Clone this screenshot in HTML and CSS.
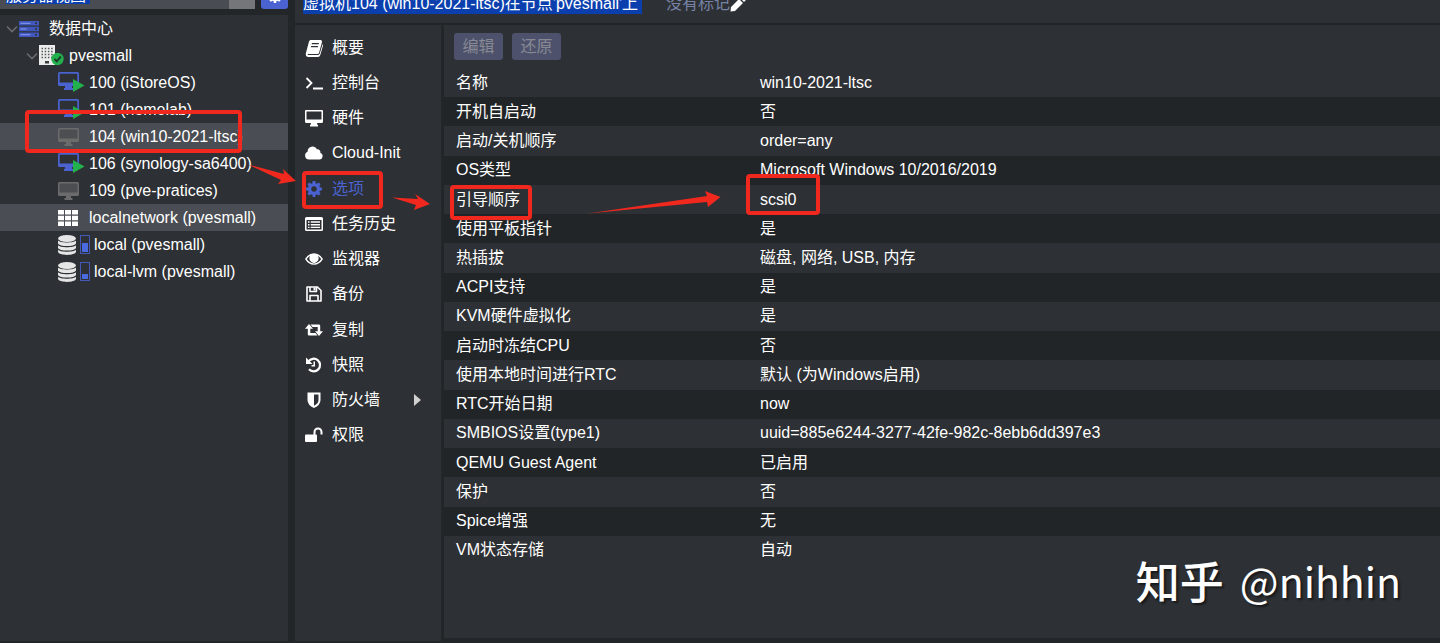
FILE: index.html
```
<!DOCTYPE html>
<html lang="zh-CN">
<head>
    <meta charset="UTF-8">
    <meta name="viewport" content="width=device-width, initial-scale=1.0">
    <title>pvesmall - Proxmox Virtual Environment</title>
    <link rel="stylesheet" href="styles.css">
</head>
<body>
    <!-- Shared icon shapes -->
    <svg class="sprite" aria-hidden="true">
        <symbol id="chevron" viewBox="0 0 12 12"><path d="M1 3.500l5 5 5-5" fill="none" stroke="#686b6e" stroke-width="1.600"/></symbol>
        <symbol id="desktop" viewBox="0 0 22 18"><path fill-rule="evenodd" d="M1.500 0h18a1.500 1.500 0 0 1 1.500 1.500v11a1.500 1.500 0 0 1-1.500 1.500H14v2h1v2H6v-2h1v-2H1.500A1.500 1.500 0 0 1 0 12.500v-11A1.500 1.500 0 0 1 1.500 0zM1.700 1.700v8.800h17.600V1.700z"/></symbol>
        <symbol id="desktop-off" viewBox="0 0 22 18"><path fill="#4d4e51" d="M1 1h19v10H1z"/><path fill="#6b6b6c" fill-rule="evenodd" d="M1.500 0h18a1.500 1.500 0 0 1 1.500 1.500v11a1.500 1.500 0 0 1-1.500 1.500H13v2h1.500v2h-8v-2H8v-2H1.500A1.500 1.500 0 0 1 0 12.500v-11A1.500 1.500 0 0 1 1.500 0zM1.500 1.500v9h18v-9z"/></symbol>
        <symbol id="desktop-on" viewBox="0 0 27 21"><use href="#desktop" width="22" height="18" fill="#4a63d0"/><path fill="#23b14d" d="M15 7l11.500 6.500L15 20z"/></symbol>
        <symbol id="database" viewBox="0 0 18 20"><ellipse cx="9" cy="3.500" rx="9" ry="3.500"/><path d="M0 5.500c2 2.600 16 2.600 18 0v3c-1 3.400-17 3.400-18 0zM0 10.300c2 2.600 16 2.600 18 0v2.700c-1 3.400-17 3.400-18 0zM0 14.800c2 2.600 16 2.600 18 0v2c-1 4.200-17 4.200-18 0z"/></symbol>
        <symbol id="gear" viewBox="0 0 16 16"><path fill-rule="evenodd" d="M6.700 0h2.600l.4 2.200 1.200.5 1.800-1.300 1.900 1.900-1.300 1.800.5 1.200 2.200.4v2.600l-2.200.4-.5 1.200 1.300 1.800-1.900 1.900-1.800-1.300-1.200.5-.4 2.200H6.700l-.4-2.200-1.200-.5-1.800 1.300-1.900-1.900 1.300-1.800-.5-1.200L0 9.300V6.700l2.200-.4.5-1.200-1.300-1.800 1.900-1.900 1.800 1.300 1.200-.5zM8 5.300a2.700 2.700 0 1 0 0 5.400 2.700 2.700 0 0 0 0-5.400z"/></symbol>
    </svg>

    <div class="workspace">
        <!-- Resource tree -->
        <aside class="sidebar">
            <div class="view-bar">
                <select class="view-select" aria-label="视图">
                    <option>服务器视图</option>
                </select>
                <button class="view-settings" type="button" aria-label="设置"><svg width="14" height="14" fill="#fff"><use href="#gear"/></svg></button>
            </div>
            <ul class="tree">
                <li class="node level-0">
                    <svg class="toggle" width="12" height="12"><use href="#chevron"/></svg>
                    <span class="node-icon"><svg width="20" height="16" viewBox="0 0 20 16"><g fill="#4057bd"><path d="M0 0h20v4.500H0zM0 5.700h20v4.500H0zM0 11.400h20V16H0z"/></g><path stroke="#8e9df0" d="M1.500 2.300h10M1.500 8h6M1.500 13.700h10"/><path fill="#2d3034" d="M16 1.500h2v1.500h-2zM16 7.200h2v1.500h-2zM16 13h2v1.500h-2z"/></svg></span>
                    <span>数据中心</span>
                </li>
                <li class="node level-1">
                    <svg class="toggle" width="12" height="12"><use href="#chevron"/></svg>
                    <span class="node-icon"><svg width="25" height="21" viewBox="0 0 25 21"><path fill="#ececec" d="M0 0h16v20H0z"/><path stroke="#54575a" stroke-width="1.500" stroke-dasharray="1.500 1.700" d="M2.500 3.500h12M2.500 6.500h12M2.500 9.500h12M2.500 12.500h12"/><path fill="#3a3d40" d="M6 16h4v2.500H6z"/><circle cx="18.500" cy="14" r="6.200" fill="#23b14d"/><path fill="none" stroke="#1d3c2a" stroke-width="2" d="M15.500 14l2.300 2.300 4-4.800"/></svg></span>
                    <span>pvesmall</span>
                </li>
                <li class="node level-2"><span class="node-icon"><svg width="27" height="21"><use href="#desktop-on"/></svg></span><span>100 (iStoreOS)</span></li>
                <li class="node level-2"><span class="node-icon"><svg width="27" height="21"><use href="#desktop-on"/></svg></span><span>101 (homelab)</span></li>
                <li class="node level-2 selected"><span class="node-icon"><svg width="22" height="18"><use href="#desktop-off"/></svg></span><span>104 (win10-2021-ltsc)</span></li>
                <li class="node level-2"><span class="node-icon"><svg width="27" height="21"><use href="#desktop-on"/></svg></span><span>106 (synology-sa6400)</span></li>
                <li class="node level-2"><span class="node-icon"><svg width="22" height="18"><use href="#desktop-off"/></svg></span><span>109 (pve-pratices)</span></li>
                <li class="node level-2 selected"><span class="node-icon"><svg width="20" height="16" viewBox="0 0 20 16" fill="#fff"><path d="M0 0h6v4.500H0zM7 0h6v4.500H7zM14 0h6v4.500h-6zM0 5.700h6v4.500H0zM7 5.700h6v4.500H7zM14 5.700h6v4.500h-6zM0 11.400h6v4.500H0zM7 11.400h6v4.500H7zM14 11.400h6v4.500h-6z"/></svg></span><span>localnetwork (pvesmall)</span></li>
                <li class="node level-2"><span class="node-icon storage"><svg width="18" height="20" fill="#e6e6e6"><use href="#database"/></svg><span class="usage"><span class="usage-fill" style="height: 60%"></span></span></span><span>local (pvesmall)</span></li>
                <li class="node level-2"><span class="node-icon storage"><svg width="18" height="20" fill="#e6e6e6"><use href="#database"/></svg><span class="usage"><span class="usage-fill" style="height: 33%"></span></span></span><span>local-lvm (pvesmall)</span></li>
            </ul>
        </aside>

        <main class="main">
            <header class="vm-header">
                <span class="vm-title">虚拟机104 (win10-2021-ltsc)在节点'pvesmall'上</span>
                <span class="vm-tags">没有标记</span>
                <svg width="16" height="16" viewBox="0 0 16 16" fill="#fff"><path d="M1 9l8-8 4 4-8 8-4.500.5zM10 0l1.500-1.500q1-.8 2 0l2 2q.8 1 0 2L14 4z"/></svg>
            </header>

            <div class="vm-body">
                <!-- VM section menu -->
                <nav class="menu">
                    <div class="menu-list">
                        <a class="menu-item" href="#"><svg viewBox="0 0 18 18"><path fill-rule="evenodd" d="M5.500 1h10.300q1.500.3 1.200 2l-3 11q-.4 1-1.500 1H3q-.8.700 0 1h10q1.300-.2 1.700-1.300L17.600 5q.6 1 .3 2l-2.600 9q-.6 1.900-2.300 2H3Q.500 17.500.800 14.500L4 2.500Q4.500 1 5.500 1zM7 4l-.4 1.300h7L14 4zM6.200 7l-.4 1.300h7l.4-1.300z"/></svg>概要</a>
                        <a class="menu-item" href="#"><svg viewBox="0 0 18 18"><path fill="none" stroke="#fff" stroke-width="1.800" d="M1.500 4l5 5-5 5M8 14.500h10"/></svg>控制台</a>
                        <a class="menu-item" href="#"><svg viewBox="0 0 18 18"><path fill-rule="evenodd" d="M1 1h16q1 0 1 1v10.500q0 1.500-1.500 1.500H12l.5 2H13v1.500H5V16h.5l.5-2H1.500Q0 14 0 12.500V2q0-1 1-1zM1.500 2.500v8h15v-8z"/></svg>硬件</a>
                        <a class="menu-item" href="#"><svg viewBox="0 0 18 18"><path d="M4 15.500a4 4 0 0 1-1.400-7.700A5 5 0 0 1 12 5.300a3 3 0 0 1 3.400 3.600A3.400 3.400 0 0 1 14.500 15.500z"/></svg>Cloud-Init</a>
                        <a class="menu-item active" href="#"><svg viewBox="-1 -1 18 18"><use href="#gear" width="16" height="16"/></svg>选项</a>
                        <a class="menu-item" href="#"><svg viewBox="0 0 18 18"><path fill-rule="evenodd" d="M1.500 2h15Q18 2 18 3.500v11q0 1.500-1.500 1.500h-15Q0 16 0 14.500v-11Q0 2 1.500 2zM1.500 5v9.500h15V5z"/><path d="M3 6.300h1.500v1.400H3zM3 9h1.500v1.400H3zM3 11.700h1.500V13H3zM5.700 6.300H15v1.400H5.700zM5.700 9H15v1.400H5.700zM5.700 11.700H15V13H5.700z"/></svg>任务历史</a>
                        <a class="menu-item" href="#"><svg viewBox="0 0 18 18"><path fill-rule="evenodd" d="M0 9q3.500-5.800 9-5.800T18 9q-3.500 5.800-9 5.800T0 9zm1.800 0Q4.800 13.400 9 13.400T16.200 9q-1.300-2-3.400-3.200a4.500 4.500 0 1 1-7.600 0Q3.100 7 1.800 9z"/><path fill-rule="evenodd" d="M9 5a3.800 3.800 0 1 0 3.800 3.800A3.800 3.800 0 0 0 9 5zm-2 3.700a.6.600 0 0 1-1 0A3 3 0 0 1 9 6a.5.500 0 0 1 0 1 2 2 0 0 0-2 1.700z"/></svg>监视器</a>
                        <a class="menu-item" href="#"><svg viewBox="0 0 18 18"><path fill="none" stroke="#fff" stroke-width="1.600" stroke-linejoin="round" d="M2 2h10.500L16 5.500V16H2zM5 16v-5.500h8V16M5 2v4.500h6.500V2"/><path d="M8.500 2.500h2v3h-2z"/></svg>备份</a>
                        <a class="menu-item" href="#"><svg viewBox="0 0 18 18"><path d="M4 3l4 4.700H5.300V12h5.200l2 2.500H4q-1.200 0-1.200-1.200V7.700H0zM14 15l-4-4.700h2.700V6H7.500l-2-2.500H14q1.200 0 1.200 1.200v5.600H18z"/></svg>复制</a>
                        <a class="menu-item" href="#"><svg viewBox="0 0 18 18"><path fill="none" stroke="#fff" stroke-width="2.200" d="M3.500 5.500A6.300 6.300 0 1 1 4 13.200"/><path d="M1 1.500V8h6.500z"/><path d="M8.500 5.500H10v5H6.500V9h2z"/></svg>快照</a>
                        <a class="menu-item" href="#"><svg viewBox="0 0 18 18"><path fill-rule="evenodd" d="M2.500 1.500h13V9q0 5-6.500 8-6.500-3-6.500-8zM9 3.500v11.300q4.500-2.300 4.500-5.800V3.500z"/></svg>防火墙<span class="submenu-arrow"></span></a>
                        <a class="menu-item" href="#"><svg viewBox="0 0 18 18"><path d="M1 8.500h10q1 0 1 1V15q0 1-1 1H1q-1 0-1-1V9.500q0-1 1-1z"/><path fill="none" stroke="#fff" stroke-width="2" d="M9.500 9V6a3.500 3.500 0 0 1 7 0v2.500"/></svg>权限</a>
                    </div>
                </nav>

                <!-- VM options -->
                <section class="options">
                    <div class="toolbar">
                        <button class="tool-btn" type="button" disabled>编辑</button>
                        <button class="tool-btn" type="button" disabled>还原</button>
                    </div>
                    <table class="option-table">
                        <tbody>
                            <tr><th scope="row">名称</th><td>win10-2021-ltsc</td></tr>
                            <tr><th scope="row">开机自启动</th><td>否</td></tr>
                            <tr><th scope="row">启动/关机顺序</th><td>order=any</td></tr>
                            <tr><th scope="row">OS类型</th><td>Microsoft Windows 10/2016/2019</td></tr>
                            <tr><th scope="row">引导顺序</th><td>scsi0</td></tr>
                            <tr><th scope="row">使用平板指针</th><td>是</td></tr>
                            <tr><th scope="row">热插拔</th><td>磁盘, 网络, USB, 内存</td></tr>
                            <tr><th scope="row">ACPI支持</th><td>是</td></tr>
                            <tr><th scope="row">KVM硬件虚拟化</th><td>是</td></tr>
                            <tr><th scope="row">启动时冻结CPU</th><td>否</td></tr>
                            <tr><th scope="row">使用本地时间进行RTC</th><td>默认 (为Windows启用)</td></tr>
                            <tr><th scope="row">RTC开始日期</th><td>now</td></tr>
                            <tr><th scope="row">SMBIOS设置(type1)</th><td>uuid=885e6244-3277-42fe-982c-8ebb6dd397e3</td></tr>
                            <tr><th scope="row">QEMU Guest Agent</th><td>已启用</td></tr>
                            <tr><th scope="row">保护</th><td>否</td></tr>
                            <tr><th scope="row">Spice增强</th><td>无</td></tr>
                            <tr><th scope="row">VM状态存储</th><td>自动</td></tr>
                        </tbody>
                    </table>
                </section>
            </div>
        </main>
    </div>

    <!-- Red step markers drawn over the page -->
    <svg class="marks" width="840" height="240" aria-hidden="true">
        <g fill="none" stroke="#f0281e" stroke-width="4">
            <rect x="27" y="112" width="213" height="39" rx="2"/>
            <rect x="304" y="173" width="77" height="34" rx="2"/>
            <rect x="452" y="187" width="78" height="31" rx="2"/>
            <rect x="748" y="176" width="70" height="37" rx="2"/>
        </g>
        <g fill="#f0281e">
            <path d="M248 164.500L284 174l-1-5 13 12-18 3 3-4z"/>
            <path d="M392 197.500L418 199l-3-5 15 10-16 6 2-5z"/>
            <path d="M588 213.500L707 196l-2-5 15.500 6L708 207l-1-5z"/>
        </g>
    </svg>

    <div class="watermark"><span class="watermark-site">知乎</span><span>@nihhin</span></div>
</body>
</html>
```

FILE: styles.css
```
* {
    margin: 0;
    padding: 0;
    box-sizing: border-box;
}

body {
    font-family: "Liberation Sans", "Noto Sans CJK SC", sans-serif;
    font-size: 16px;
    line-height: 20px;
    color: #fff;
    background: #232629;
    overflow: hidden;
}

.sprite {
    display: none;
}

svg {
    flex: none;
    overflow: visible;
}

.workspace {
    display: flex;
    gap: 7px;
    height: 100vh;
    padding-bottom: 2px;
}

/* Left column */
.sidebar {
    flex: none;
    width: 288px;
    display: flex;
    flex-direction: column;
}

.view-bar {
    display: flex;
    align-items: flex-end;
    gap: 6px;
    height: 9px;
    margin-bottom: 6px;
}

.view-select {
    flex: 1;
    height: 26px;
    padding-left: 6px;
    appearance: none;
    border: none;
    font: inherit;
    color: #fff;
    background:
        linear-gradient(#0c3fae, #0c3fae) 6px 0 / 84px 21px no-repeat,
        linear-gradient(#75767a, #75767a) right / 26px 100% no-repeat,
        #494c52;
}

.view-settings {
    display: flex;
    align-items: center;
    justify-content: center;
    width: 27px;
    height: 26px;
    border: none;
    border-radius: 3px;
    background: #4a63d0;
}

.tree {
    flex: 1;
    list-style: none;
    background: #2d3034;
}

.node {
    display: flex;
    align-items: center;
    height: 27px;
    white-space: nowrap;
}

.node.selected {
    background: #4a4d53;
}

.level-0 {
    padding-left: 6px;
}

.level-1 {
    padding-left: 26px;
}

.level-2 {
    padding-left: 58px;
}

.toggle {
    margin-right: 1px;
}

.node-icon {
    display: flex;
    align-items: center;
    width: 30px;
}

.level-2 .node-icon {
    width: 31px;
}

.level-2 .storage {
    gap: 4px;
    width: 36px;
}

.usage {
    display: flex;
    align-items: flex-end;
    width: 10px;
    height: 19px;
    padding: 1px;
    border: 1px solid #4459b5;
}

.usage-fill {
    flex: 1;
    background: #4a6be0;
}

/* Right part */
.main {
    flex: 1;
    display: flex;
    flex-direction: column;
    min-width: 0;
}

.vm-header {
    display: flex;
    align-items: flex-end;
    height: 23px;
    padding: 0 8px 9px;
    background: #2d3034;
}

.vm-title {
    padding-right: 4px;
    background: #0c3fae;
    white-space: nowrap;
}

.vm-tags {
    margin-left: 24px;
    color: #7683a5;
}

.vm-body {
    flex: 1;
    display: flex;
    gap: 3px;
    margin-top: 2px;
}

.menu {
    flex: none;
    width: 146px;
    padding: 5px 20px 0 10px;
    background: #2d3034;
}

/* Entries share the list height evenly */
.menu-list {
    display: grid;
    grid-auto-rows: 1fr;
    min-height: 423px;
}

.menu-item {
    display: flex;
    align-items: center;
    gap: 9px;
    color: #fff;
    fill: #fff;
    text-decoration: none;
}

.menu-item svg {
    width: 18px;
    height: 18px;
}

.menu-item.active {
    color: #4a63d0;
    fill: #4a63d0;
}

.submenu-arrow {
    margin-left: auto;
    border: 6px solid transparent;
    border-left: 7px solid #d0d0d0;
    border-right: none;
}

.options {
    flex: 1;
    margin-bottom: 3px;
    background: #2d3034;
}

.toolbar {
    display: flex;
    gap: 9px;
    padding: 8px 10px;
}

.tool-btn {
    width: 49px;
    height: 27px;
    border: none;
    border-radius: 3px;
    font: inherit;
    color: #878994;
    background: #4d516b;
}

.option-table {
    width: 100%;
    height: 497px;
    border-collapse: collapse;
    table-layout: fixed;
}

.option-table tr:nth-child(even) {
    background: #222528;
}

.option-table th,
.option-table td {
    padding: 0 12px;
    font-weight: normal;
    text-align: left;
}

.option-table th {
    width: 304px;
}

.marks {
    position: absolute;
    top: 0;
    left: 0;
    pointer-events: none;
}

.watermark {
    position: absolute;
    right: 39px;
    bottom: 38px;
    display: flex;
    align-items: center;
    gap: 16px;
    font-family: "Noto Sans CJK SC", sans-serif;
    font-size: 41px;
    line-height: 50px;
    text-shadow: 2px 2px 2px rgba(0, 0, 0, 0.5);
}

.watermark-site {
    font-size: 44px;
    font-weight: 500;
}
```
